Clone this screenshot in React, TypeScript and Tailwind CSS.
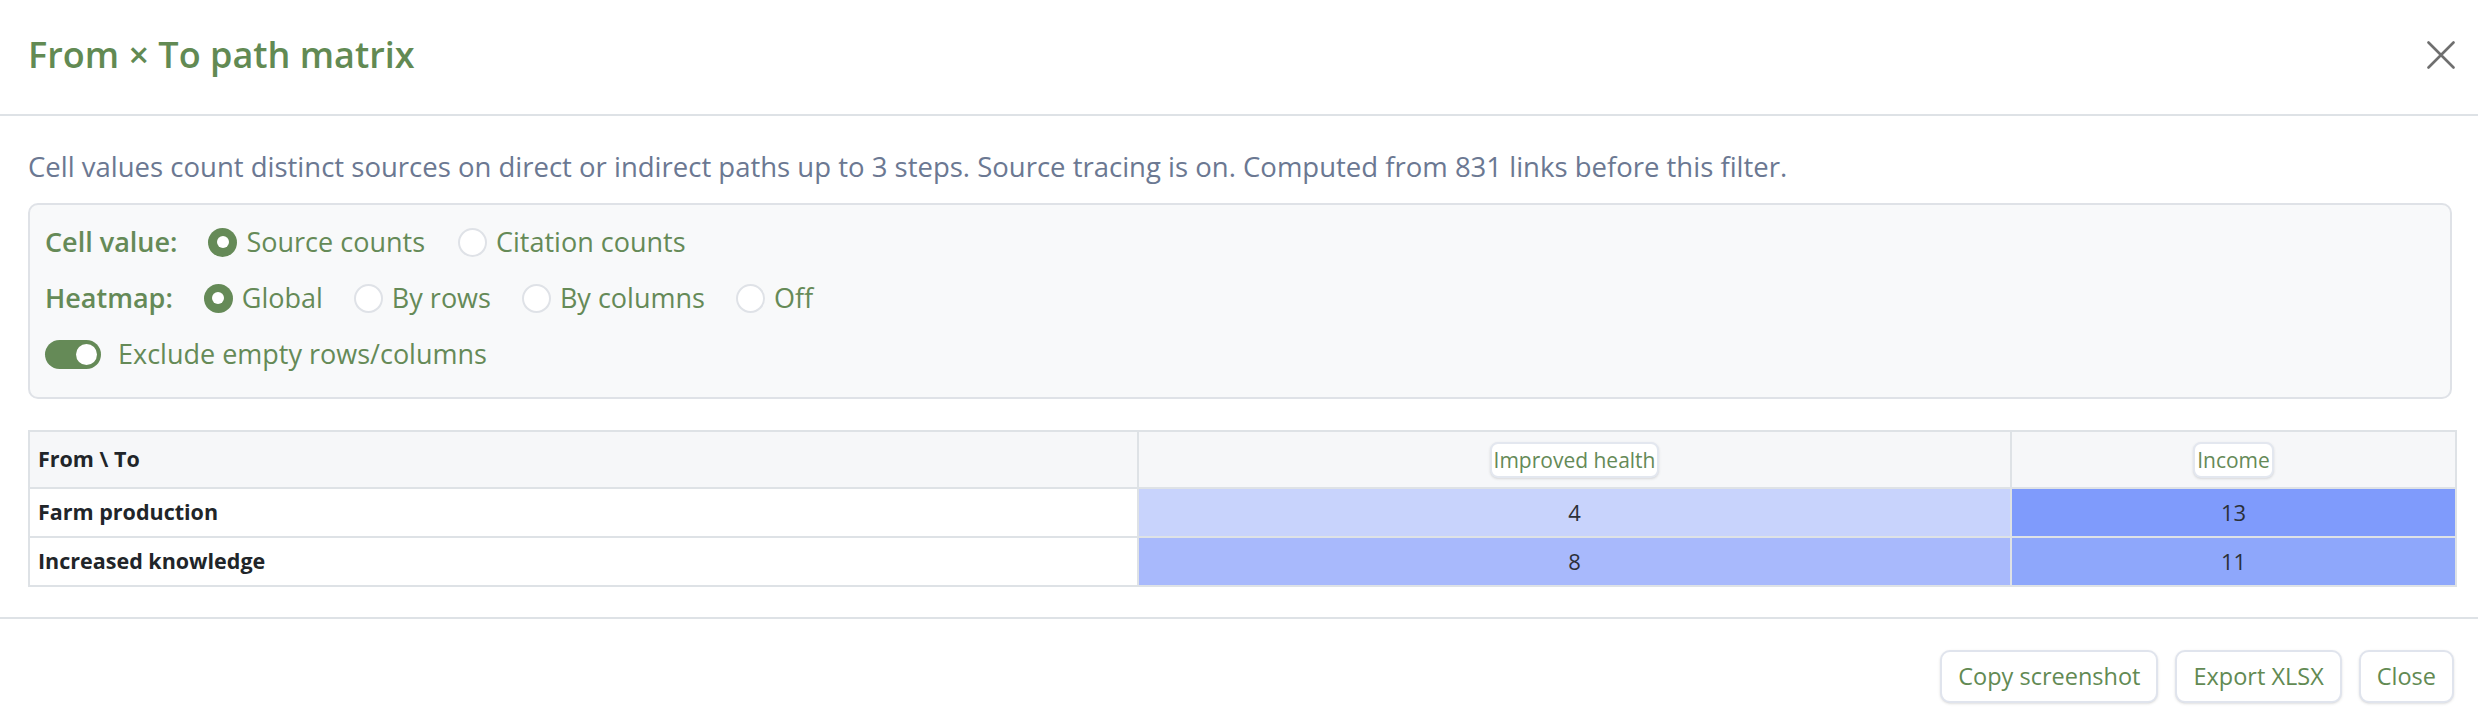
import React, {useState} from "react";

type RadioProps = {
    label: string;
    checked: boolean;
    onClick: () => void;
};

const Radio: React.FC<RadioProps> = ({label, checked, onClick}) => (
    <label className="flex items-center gap-[9px] cursor-pointer" onClick={onClick}>
        {checked ? (
            <span className="w-[29px] h-[29px] rounded-full bg-[#658a57] flex items-center justify-center">
                <span className="w-[12px] h-[12px] rounded-full bg-white"/>
            </span>
        ) : (
            <span className="w-[29px] h-[29px] rounded-full bg-white border-2 border-[#dfe2e7]"/>
        )}
        <span>{label}</span>
    </label>
);

const rows = [
    {name: "Farm production", values: [4, 13]},
    {name: "Increased knowledge", values: [8, 11]},
];

const cellBg: Record<number, string> = {
    4: "bg-[#c8d3fc]",
    8: "bg-[#a8b9fc]",
    11: "bg-[#8ea7fb]",
    13: "bg-[#7f9bfc]",
};

export default function App() {
    const [cellValue, setCellValue] = useState("source");
    const [heatmap, setHeatmap] = useState("global");
    const [excludeEmpty, setExcludeEmpty] = useState(true);

    return (
        <div className="w-[2478px] h-[727px] bg-white flex flex-col"
             style={{fontFamily: '"Open Sans", "Noto Sans", sans-serif'}}>
            {/* header */}
            <div className="h-[116px] shrink-0 flex items-center justify-between pl-[28px] pr-[23px] border-b-2 border-[#dee2e6]">
                <h2 className="text-[36px] font-semibold text-[#628a53] leading-none pb-[4px]">From × To path matrix</h2>
                <button className="w-[28px] h-[28px] mb-[4px]">
                    <svg viewBox="0 0 28 28" width="28" height="28" fill="none" stroke="#6f6f6f" strokeWidth="2.6"
                         strokeLinecap="round">
                        <path d="M1.5 1.5 L26.5 26.5 M26.5 1.5 L1.5 26.5"/>
                    </svg>
                </button>
            </div>

            {/* body */}
            <div className="flex-1 pl-[28px] pr-[26px] pt-[32px]">
                <p className="text-[27.5px] leading-[38px] text-[#6b7892]">
                    Cell values count distinct sources on direct or indirect paths up to 3 steps. Source tracing is on.
                    Computed from 831 links before this filter.
                </p>

                <div className="mt-[17px] bg-[#f8f9fa] border-2 border-[#dfe2e7] rounded-[10px] pl-[15px] pt-[19px] pb-[25px] flex flex-col gap-[20px] text-[27px] text-[#658a57]">
                    <div className="flex items-center h-[36px]">
                        <span className="font-semibold mr-[31px]">Cell value:</span>
                        <div className="flex items-center gap-[33px]">
                            <Radio label="Source counts" checked={cellValue === "source"}
                                   onClick={() => setCellValue("source")}/>
                            <Radio label="Citation counts" checked={cellValue === "citation"}
                                   onClick={() => setCellValue("citation")}/>
                        </div>
                    </div>
                    <div className="flex items-center h-[36px]">
                        <span className="font-semibold mr-[31px]">Heatmap:</span>
                        <div className="flex items-center gap-[31px]">
                            <Radio label="Global" checked={heatmap === "global"} onClick={() => setHeatmap("global")}/>
                            <Radio label="By rows" checked={heatmap === "rows"} onClick={() => setHeatmap("rows")}/>
                            <Radio label="By columns" checked={heatmap === "columns"}
                                   onClick={() => setHeatmap("columns")}/>
                            <Radio label="Off" checked={heatmap === "off"} onClick={() => setHeatmap("off")}/>
                        </div>
                    </div>
                    <div className="flex items-center h-[36px] gap-[17px]">
                        <button onClick={() => setExcludeEmpty(!excludeEmpty)}
                                className={`w-[56px] h-[29px] rounded-full flex items-center px-[4px] ${excludeEmpty ? "bg-[#658a57] justify-end" : "bg-white border-2 border-[#dfe2e7] justify-start"}`}>
                            <span className={`w-[21px] h-[21px] rounded-full ${excludeEmpty ? "bg-white" : "bg-[#dfe2e7]"}`}/>
                        </button>
                        <span>Exclude empty rows/columns</span>
                    </div>
                </div>

                <table className="mt-[31px] w-[2427px] table-fixed border-collapse border-2 border-[#dee2e6]">
                    <colgroup>
                        <col className="w-[1109px]"/>
                        <col className="w-[873px]"/>
                        <col className="w-[445px]"/>
                    </colgroup>
                    <thead>
                    <tr className="h-[57px] bg-[#f6f7f9]">
                        <th className="border-2 border-[#dee2e6] text-left pl-[8px] text-[21.5px] font-bold text-[#212529]">From \ To</th>
                        {["Improved health", "Income"].map((h) => (
                            <th key={h} className="border-2 border-[#dee2e6] text-center">
                                <span className="inline-block bg-white border-2 border-[#e3e7ef] rounded-[8px] shadow-sm px-[2px] h-[36px] leading-[32px] text-[21px] font-normal text-[#658a57]">
                                    {h}
                                </span>
                            </th>
                        ))}
                    </tr>
                    </thead>
                    <tbody>
                    {rows.map((r) => (
                        <tr key={r.name} className="h-[49px]">
                            <td className="border-2 border-[#dee2e6] pl-[8px] text-[21.5px] font-bold text-[#212529]">{r.name}</td>
                            {r.values.map((v, i) => (
                                <td key={i}
                                    className={`border-2 border-[#dee2e6] text-center text-[22px] text-[#2b3038] ${cellBg[v]}`}>
                                    {v}
                                </td>
                            ))}
                        </tr>
                    ))}
                    </tbody>
                </table>
            </div>

            {/* footer */}
            <div className="h-[110px] shrink-0 border-t-2 border-[#dee2e6] flex items-start justify-end gap-[17px] pt-[31px] pr-[24px]">
                {["Copy screenshot", "Export XLSX", "Close"].map((b) => (
                    <button key={b}
                            className="h-[53px] px-[16px] bg-white border-2 border-[#e0e4ed] rounded-[10px] shadow-sm text-[23.5px] text-[#628a53]">
                        {b}
                    </button>
                ))}
            </div>
        </div>
    );
}
